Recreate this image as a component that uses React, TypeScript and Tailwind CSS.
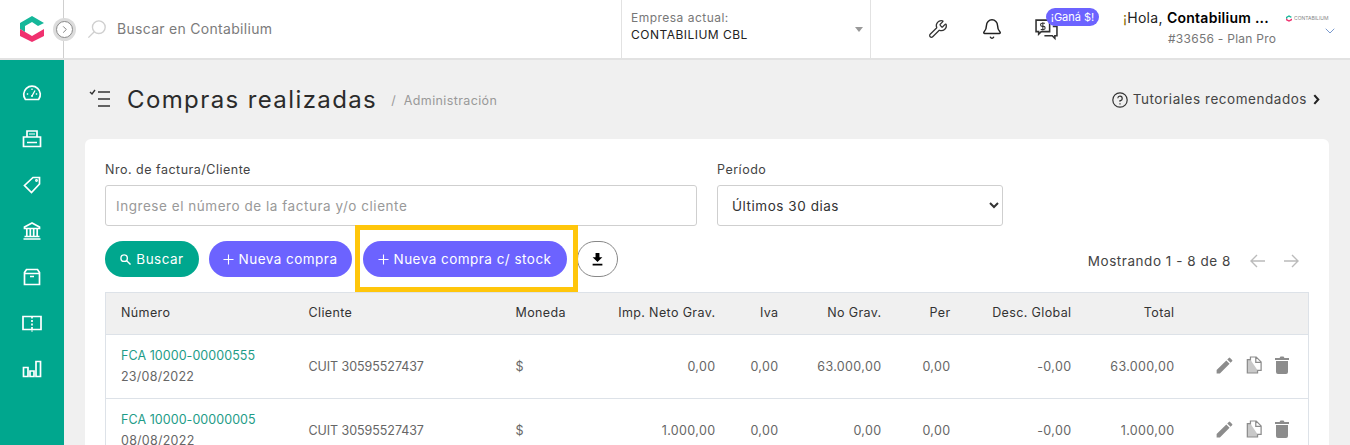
import { Bell, ChevronDown, Wrench } from "lucide-react";

const rows = [
  { num: "FCA 10000-00000555", date: "23/08/2022", neto: "0,00", nograv: "63.000,00", total: "63.000,00" },
  { num: "FCA 10000-00000005", date: "08/08/2022", neto: "1.000,00", nograv: "0,00", total: "1.000,00" },
];

function Logo({ className }: { className: string }) {
  return (
    <svg viewBox="20 15 24 26" className={className}>
      <polygon points="32,15 44,22 38,25 32,21 25,25 25,31 20,28 20,22" fill="#15b79a" />
      <polygon points="20,28 32,35 44,28 44,35 32,41 20,35" fill="#f0316f" />
    </svg>
  );
}

function SideIcon({ children }: { children: React.ReactNode }) {
  return (
    <svg viewBox="0 0 20 20" fill="none" stroke="currentColor" strokeWidth="1.7" className="w-5 h-5">
      {children}
    </svg>
  );
}

function SideBar() {
  return (
    <aside className="w-16 shrink-0 bg-[#00a78e] text-white flex flex-col items-center pt-[23px] gap-[26px]">
      <SideIcon>
        <path d="M3.4 16.5A8.3 8.3 0 1 1 16.6 16.5Z" />
        <path d="M10 13L13 7.5M4.8 11h1.4M13.8 11h1.4M10 5.5V7" strokeWidth="1.3" />
        <circle cx="10" cy="13" r="1" fill="currentColor" stroke="none" />
      </SideIcon>
      <SideIcon>
        <path d="M5 8V2h10v6M1.5 8h17v9.5h-17zM5 13.5h10" />
        <path d="M7 5h6" strokeWidth="1" />
      </SideIcon>
      <SideIcon>
        <path d="M11 2.5h6.5V9L9.5 17.5 2.5 10.5Z" />
        <circle cx="14.5" cy="5.5" r="0.6" />
      </SideIcon>
      <SideIcon>
        <path d="M10 2L2.5 6v1.5h15V6ZM4.8 8v7M8.3 8v7M11.7 8v7M15.2 8v7M2.5 15.5h15M1.5 18h17" />
      </SideIcon>
      <SideIcon>
        <path d="M2.5 5.5L4.5 2.5h11l2 3v12h-15ZM2.5 6.5h15M8 9.5h4" />
      </SideIcon>
      <SideIcon>
        <path d="M10 3.5H1v13h9M10 3.5h9v13h-9" />
        <path d="M10 3.5v15" strokeDasharray="2 1.5" />
      </SideIcon>
      <SideIcon>
        <path d="M1.5 8.5h4.5v9H1.5ZM8 12h4v5.5H8ZM14 2.5h4.5v15H14Z" />
      </SideIcon>
    </aside>
  );
}

function Header() {
  return (
    <header className="relative flex h-[60px] shrink-0 bg-white border-b-2 border-[#e2e2e2]">
      <div className="w-16 shrink-0 border-r border-[#cfcfcf] flex items-center pl-5">
        <Logo className="w-6 h-[26px]" />
      </div>
      {/* sidebar toggle */}
      <div className="absolute left-[53px] top-[18px] w-[23px] h-[23px] rounded-full bg-[#dcdcdc] flex items-center justify-center">
        <div className="w-[17px] h-[17px] rounded-full bg-white border border-[#8a8a8a] flex items-center justify-center">
          <svg viewBox="0 0 10 10" fill="none" stroke="#777" strokeWidth="1" className="w-[9px] h-[9px]">
            <path d="M3.5 1.5L7 5L3.5 8.5" />
          </svg>
        </div>
      </div>
      <div className="w-[557px] shrink-0 flex items-center pl-[23px] pb-[1px] gap-[10px] text-[14px] text-[#7b7b7b] tracking-[0.021em]">
        <svg viewBox="0 0 22 22" fill="none" stroke="#cfcfcf" strokeWidth="1.5" className="w-5 h-5">
          <circle cx="13" cy="9" r="7" />
          <path d="M8 14L1.5 20.5" />
        </svg>
        Buscar en Contabilium
      </div>
      <div className="relative w-[250px] h-[58px] shrink-0 border-x border-[#e2e2e2] pl-[9px] pt-[9px] text-[12px] leading-[17px] tracking-[0.04em]">
        <div className="text-[#777]">Empresa actual:</div>
        <div className="text-[#222]">CONTABILIUM CBL</div>
        <div className="absolute right-[7px] top-[27px] border-x-4 border-t-[5px] border-x-transparent border-t-[#999]" />
      </div>
      <div className="w-[177px] shrink-0 relative">
        <Wrench className="absolute left-[57px] top-[19px] w-5 h-5 text-[#333]" strokeWidth={1.5} />
        <Bell className="absolute left-[110px] top-[18px] w-[22px] h-[22px] text-[#222]" strokeWidth={1.6} />
        <svg viewBox="0 0 22 22" fill="none" stroke="#333" strokeWidth="1.5" className="absolute left-[164px] top-[18px] w-[23px] h-[23px]">
          <path d="M1 2h13v11H6l-2.5 2.5V13H1Z" />
          <path d="M17 8h4v9h-2v2.5L16.5 17H9" />
          <path d="M9.5 5H6.8a1 1 0 0 0 0 3h1.4a1 1 0 0 1 0 3H5.5M7.5 4v8" strokeWidth="1" />
        </svg>
      </div>
      <div className="absolute left-[1046px] top-[8px] h-[18px] w-[53px] rounded-full bg-[#6c63ff] text-white text-[11px] leading-[18px] text-center">
        ¡Ganá $!
      </div>
      <div className="relative w-[250px] text-[13px] tracking-[0.02em]">
        <div className="absolute left-[75px] top-[7px] whitespace-nowrap text-[14px] text-[#222]">
          <span className="text-[#8a6d00]">¡</span>Hola, <span className="font-semibold text-black">Contabilium ...</span>
        </div>
        <div className="absolute left-[120px] top-[30px] whitespace-nowrap text-[12px] text-[#777]">#33656 - Plan Pro</div>
        <div className="absolute left-[238px] top-[15px] flex items-center gap-[2px]">
          <Logo className="w-[6px] h-[7px]" />
          <span className="text-[5px] leading-none text-[#888] tracking-normal">CONTABILIUM</span>
        </div>
        <ChevronDown className="absolute left-[274px] top-[23px] w-4 h-4 text-[#5f86c4]" strokeWidth={1.25} />
      </div>
    </header>
  );
}

function PlusLabel({ label }: { label: string }) {
  return (
    <span className="flex items-center gap-[5px] -ml-[1px]">
      <svg viewBox="0 0 12 12" stroke="white" strokeWidth="1.2" className="w-[11px] h-[11px]">
        <path d="M6 0.5v11M0.5 6h11" />
      </svg>
      {label}
    </span>
  );
}

function RowIcons() {
  return (
    <div className="flex items-center gap-[11px] pl-[23px] pb-[3px] text-[#8c8c8c]">
      <svg viewBox="0 0 24 24" fill="currentColor" className="w-[21px] h-[21px]">
        <path d="M3 17.25V21h3.75L17.81 9.94l-3.75-3.75L3 17.25zM20.71 7.04a1 1 0 0 0 0-1.41l-2.34-2.34a1 1 0 0 0-1.41 0l-1.83 1.83 3.75 3.75 1.83-1.83z" />
      </svg>
      <svg viewBox="0 0 18 20" fill="none" stroke="currentColor" strokeWidth="1.4" className="w-[16px] h-[18px]">
        <path d="M5 1h6.5L17 6.5V16H5ZM11 1v6h6" />
        <path d="M5 4H1.5v15H13v-3" fill="#c9c9c9" />
      </svg>
      <svg viewBox="0 0 14 18" fill="currentColor" className="w-[14px] h-[18px] ml-[2px]">
        <path d="M1 5h12v11a2 2 0 0 1-2 2H3a2 2 0 0 1-2-2ZM0 2h4.5l1-1.5h3l1 1.5H14v2H0Z" />
      </svg>
    </div>
  );
}

function Table() {
  const th = "font-normal text-[#333] text-right pr-4";
  const td = "text-right pr-4 pt-[2px] text-[#666]";
  return (
    <table className="w-[1203px] table-fixed border border-[#dde2e8] text-[12.5px] tracking-[0.03em]">
      <colgroup>
        <col className="w-[187px]" />
        <col className="w-[207px]" />
        <col className="w-[91px]" />
        <col className="w-[141px]" />
        <col className="w-[63px]" />
        <col className="w-[103px]" />
        <col className="w-[69px]" />
        <col className="w-[121px]" />
        <col className="w-[103px]" />
        <col className="w-[118px]" />
      </colgroup>
      <thead>
        <tr className="h-[42px] bg-[#f0f0f0] border-b border-[#dde2e8]">
          <th className="font-normal text-[#333] text-left pl-[15px]">Número</th>
          <th className="font-normal text-[#333] text-left pl-4">Cliente</th>
          <th className="font-normal text-[#333] text-left pl-4">Moneda</th>
          <th className={th}>Imp. Neto Grav.</th>
          <th className={th}>Iva</th>
          <th className={th}>No Grav.</th>
          <th className={th}>Per</th>
          <th className={th}>Desc. Global</th>
          <th className={th}>Total</th>
          <th />
        </tr>
      </thead>
      <tbody>
        {rows.map((r) => (
          <tr key={r.num} className="h-[64px] border-b border-[#dde2e8]">
            <td className="pl-[15px] pb-[2px] tracking-[0.005em]">
              <div className="text-[#1e9c87] leading-[21px]">{r.num}</div>
              <div className="text-[#666] leading-[21px] tracking-[0.02em]">{r.date}</div>
            </td>
            <td className="pl-4 pt-[2px] text-[#666] tracking-[-0.005em]">CUIT 30595527437</td>
            <td className="pl-4 pt-[2px] text-[#666]">$</td>
            <td className={td}>{r.neto}</td>
            <td className={td}>0,00</td>
            <td className={td}>{r.nograv}</td>
            <td className={td}>0,00</td>
            <td className={td}>-0,00</td>
            <td className={td}>{r.total}</td>
            <td>
              <RowIcons />
            </td>
          </tr>
        ))}
      </tbody>
    </table>
  );
}

export default function App() {
  return (
    <div className="relative h-[445px] w-[1350px] overflow-hidden flex flex-col bg-[#f0f0f0] font-['Inter','Liberation_Sans',sans-serif]">
      <Header />
      <div className="flex flex-1 min-h-0">
        <SideBar />
        <main className="flex-1 min-w-0 px-[21px]">
          <div className="flex items-center h-[79px]">
            <svg viewBox="0 0 22 18" fill="none" stroke="#333" strokeWidth="1.4" className="w-[22px] h-[18px] mr-4 mt-[-4px] ml-[4px]">
              <path d="M1 3l2 2 3-4M9 3h12M9 10h12M9 17h12" />
            </svg>
            <h1 className="text-[24px] text-[#2b2b2b] tracking-[0.058em]">Compras realizadas</h1>
            <span className="ml-[14px] text-[12.5px] text-[#999] tracking-[0.03em] mt-1 whitespace-pre">/{"  "}Administración</span>
            <div className="ml-auto flex items-center gap-[5px] mr-[9px] text-[13.5px] text-[#444] tracking-[0.04em]">
              <svg viewBox="0 0 16 16" fill="none" stroke="#333" strokeWidth="1.2" className="w-4 h-4">
                <circle cx="8" cy="8" r="7.2" />
                <path d="M5.8 6.2A2.2 2.2 0 1 1 8 8.6v1.2M8 11.2v1.2" />
              </svg>
              Tutoriales recomendados
              <svg viewBox="0 0 8 12" fill="none" stroke="#222" strokeWidth="2.4" className="w-[7px] h-[11px] ml-[1px]">
                <path d="M1.5 1L6 6L1.5 11" />
              </svg>
            </div>
          </div>
          <section className="relative bg-white rounded-t-md px-5 pt-[22px] h-[400px]">
            <div className="flex gap-5">
              <div className="w-[592px]">
                <label className="block text-[12.5px] text-[#444] tracking-[0.04em] leading-[17px] mb-[7px]">Nro. de factura/Cliente</label>
                <input
                  placeholder="Ingrese el número de la factura y/o cliente"
                  className="w-full h-[41px] px-[10px] border border-[#cfcfcf] rounded-[3px] bg-white text-[13.5px] tracking-[0.04em] placeholder:text-[#999]"
                />
              </div>
              <div className="w-[286px]">
                <label className="block text-[12.5px] text-[#444] tracking-[0.04em] leading-[17px] mb-[7px]">Período</label>
                <select className="w-full h-[41px] px-[10px] border border-[#cfcfcf] rounded-[3px] bg-white text-[13.5px] text-[#333] tracking-[0.04em]">
                  <option>Últimos 30 dias</option>
                </select>
              </div>
            </div>
            <div className="flex items-center mt-[15px] h-[36px] text-[13.5px] text-white tracking-[0.035em]">
              <button className="w-[94px] h-9 rounded-full bg-[#00a78e] flex items-center justify-center gap-[5px]">
                <svg viewBox="0 0 12 12" fill="none" stroke="white" strokeWidth="1.5" className="w-[11px] h-[11px]">
                  <circle cx="4.5" cy="4.5" r="3.5" />
                  <path d="M7 7l4.5 4.5" />
                </svg>
                Buscar
              </button>
              <button className="w-[143px] h-9 ml-[10px] rounded-full bg-[#6c63ff] flex items-center justify-center">
                <PlusLabel label="Nueva compra" />
              </button>
              <button className="w-[204px] h-9 ml-[11px] rounded-full bg-[#6c63ff] flex items-center justify-center">
                <PlusLabel label="Nueva compra c/ stock" />
              </button>
              <button className="w-[41px] h-9 ml-[10px] rounded-full bg-white border border-[#888] flex items-center justify-center">
                <svg viewBox="0 0 10 12" fill="#000" className="w-[11px] h-[13px]">
                  <path d="M3.2 0h3.6v4H9.5L5 8.3 0.5 4h2.7ZM0.5 10h9v1.6h-9Z" />
                </svg>
              </button>
              <div className="ml-auto flex items-center pt-1 text-[13.5px] text-[#444] tracking-[0.04em]">
                Mostrando 1 - 8 de 8
                <svg viewBox="0 0 16 14" fill="none" stroke="#bbb" strokeWidth="1.4" className="w-4 h-[14px] ml-[19px]">
                  <path d="M15 7H1M7 1L1 7l6 6" />
                </svg>
                <svg viewBox="0 0 16 14" fill="none" stroke="#bbb" strokeWidth="1.4" className="w-4 h-[14px] ml-[17px] mr-[10px]">
                  <path d="M1 7h14M9 1l6 6-6 6" />
                </svg>
              </div>
            </div>
            <div className="mt-[15px]">
              <Table />
            </div>
            {/* tutorial highlight */}
            <div className="absolute left-[270px] top-[86px] w-[223px] h-[67px] border-[5px] border-[#ffc60b] pointer-events-none" />
          </section>
        </main>
      </div>
    </div>
  );
}
